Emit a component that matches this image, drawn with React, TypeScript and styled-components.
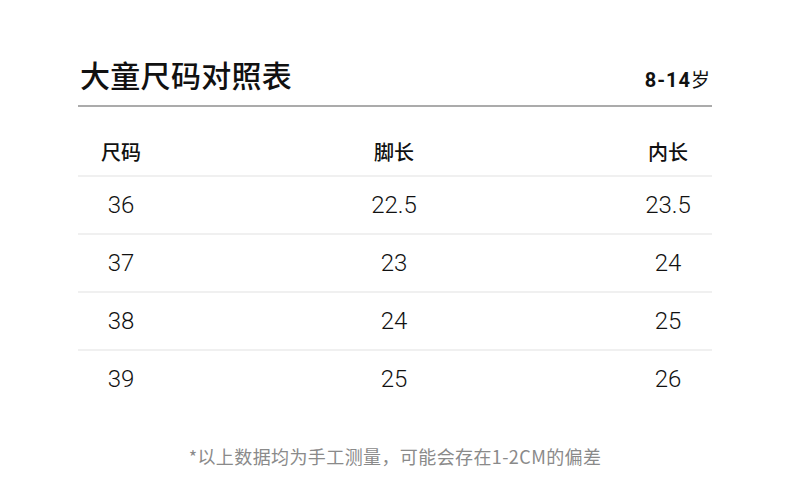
import React from "react";
import styled, { createGlobalStyle } from "styled-components";

const GlobalStyle = createGlobalStyle`
  html, body {
    margin: 0;
    padding: 0;
    background: #ffffff;
  }
  body {
    font-family: "Noto Sans CJK SC", "Noto Sans", sans-serif;
    color: #111;
  }
`;

const Page = styled.div`
  width: 790px;
  height: 489px;
  box-sizing: border-box;
  padding: 54px 78px 0 78px;
  display: flex;
  flex-direction: column;
`;

const TitleBar = styled.div`
  display: flex;
  justify-content: space-between;
  align-items: baseline;
  padding-bottom: 11px;
  border-bottom: 2px solid #ababab;
`;

const Title = styled.h1`
  margin: 0 0 0 2px;
  font-size: 30px;
  line-height: 40px;
  font-weight: 500;
  color: #111;
  letter-spacing: 0.3px;
`;

const AgeRange = styled.div`
  display: flex;
  align-items: baseline;
  margin-right: 2px;
`;

const AgeNum = styled.span`
  font-family: "Roboto", "Noto Sans", sans-serif;
  font-weight: 700;
  font-size: 20px;
  letter-spacing: 1px;
  color: #111;
`;

const AgeUnit = styled.span`
  font-family: "Noto Sans CJK SC", sans-serif;
  font-size: 19px;
  font-weight: 400;
  color: #111;
`;

const Table = styled.div`
  margin-top: 21px;
  display: flex;
  flex-direction: column;
`;

const Row = styled.div<{ $head?: boolean }>`
  display: grid;
  grid-template-columns: 86px 1fr 88px;
  align-items: center;
  height: ${(p) => (p.$head ? "47px" : "56px")};
  border-top: ${(p) => (p.$head ? "none" : "2px solid #f0f0f0")};
`;

const HeadCell = styled.div`
  text-align: center;
  font-family: "Noto Sans CJK SC", sans-serif;
  font-size: 20px;
  font-weight: 500;
  color: #111;
`;

const Cell = styled.div`
  text-align: center;
  font-family: "Roboto", "Noto Sans", sans-serif;
  font-weight: 300;
  font-size: 24px;
  color: #111;
`;

const Note = styled.p`
  margin: 37px 0 0 0;
  text-align: center;
  font-size: 18px;
  line-height: 24px;
  color: #8a8a8a;
  font-weight: 400;
  letter-spacing: 0.4px;
`;

const rows: [string, string, string][] = [
  ["36", "22.5", "23.5"],
  ["37", "23", "24"],
  ["38", "24", "25"],
  ["39", "25", "26"],
];

export default function App() {
  return (
    <>
      <GlobalStyle />
      <Page>
        <TitleBar>
          <Title>大童尺码对照表</Title>
          <AgeRange>
            <AgeNum>8-14</AgeNum>
            <AgeUnit>岁</AgeUnit>
          </AgeRange>
        </TitleBar>
        <Table>
          <Row $head>
            <HeadCell>尺码</HeadCell>
            <HeadCell>脚长</HeadCell>
            <HeadCell>内长</HeadCell>
          </Row>
          {rows.map((r) => (
            <Row key={r[0]}>
              <Cell>{r[0]}</Cell>
              <Cell>{r[1]}</Cell>
              <Cell>{r[2]}</Cell>
            </Row>
          ))}
        </Table>
        <Note>*以上数据均为手工测量，可能会存在1-2CM的偏差</Note>
      </Page>
    </>
  );
}
